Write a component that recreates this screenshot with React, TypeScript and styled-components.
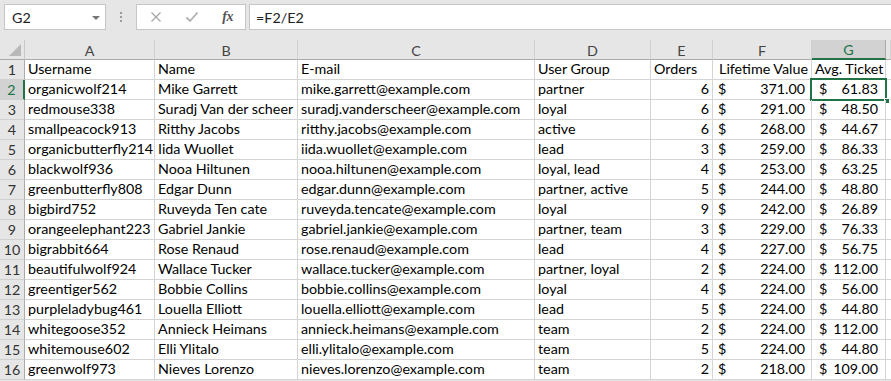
import React from "react";
import styled, { createGlobalStyle, css } from "styled-components";

const Global = createGlobalStyle`
  html, body { margin: 0; padding: 0; background: #ffffff; }
  body { font-family: "Lato", "Liberation Sans", sans-serif; overflow: hidden; }
`;

const Page = styled.div`
  width: 891px;
  height: 381px;
  overflow: hidden;
  background: #e6e6e6;
  display: flex;
  flex-direction: column;
`;

const Toolbar = styled.div`
  height: 40px;
  flex: 0 0 40px;
  display: flex;
  align-items: flex-start;
  padding: 4px 0 0 4px;
  box-sizing: border-box;
  background: #e6e6e6;
`;

const NameBox = styled.div`
  width: 102px;
  height: 26px;
  box-sizing: border-box;
  background: #ffffff;
  border: 1px solid #c6c6c6;
  display: flex;
  align-items: center;
  justify-content: space-between;
  padding: 0 5px 0 7px;
  font-size: 14.3px;
  color: #222;
`;

const DropArrow = styled.span`
  width: 0;
  height: 0;
  border-left: 4px solid transparent;
  border-right: 4px solid transparent;
  border-top: 4px solid #777;
  margin-top: 1px;
`;

const Grip = styled.div`
  width: 30px;
  height: 26px;
  display: flex;
  flex-direction: column;
  align-items: center;
  justify-content: center;
  gap: 2px;
  & > i {
    display: block;
    width: 2px;
    height: 2px;
    background: #9a9a9a;
  }
`;

const IconBox = styled.div`
  width: 110px;
  height: 26px;
  box-sizing: border-box;
  background: #ffffff;
  border: 1px solid #c6c6c6;
  display: flex;
  align-items: center;
  justify-content: space-between;
  padding: 0 12px 0 13px;
`;

const Fx = styled.span`
  font-family: "Liberation Serif", serif;
  font-style: italic;
  font-weight: bold;
  font-size: 14px;
  color: #555;
  letter-spacing: -0.5px;
`;

const FormulaInput = styled.div`
  flex: 1;
  height: 26px;
  margin-left: 3px;
  margin-right: -4px;
  box-sizing: border-box;
  background: #ffffff;
  border: 1px solid #c6c6c6;
  display: flex;
  align-items: center;
  padding-left: 6px;
  font-size: 14.3px;
  color: #222;
`;

const Sheet = styled.div`
  display: grid;
  grid-template-columns: 25px 130px 143px 237px 116px 62px 99px 74px 1fr;
  grid-auto-rows: 20px;
  background: #ffffff;
  font-size: 14.3px;
`;

const headerBase = css`
  box-sizing: border-box;
  background: #e6e6e6;
  color: #444;
  display: flex;
  align-items: center;
  justify-content: center;
  font-size: 14.3px;
`;

const Corner = styled.div`
  ${headerBase};
  position: relative;
  border-right: 1px solid #c8c8c8;
  border-bottom: 1px solid #ababab;
  &::after {
    content: "";
    position: absolute;
    right: 3px;
    bottom: 3px;
    width: 0;
    height: 0;
    border-left: 12px solid transparent;
    border-bottom: 12px solid #b8b8b8;
  }
`;

const ColHead = styled.div<{ $active?: boolean }>`
  ${headerBase};
  border-right: 1px solid #d0d0d0;
  border-bottom: 1px solid #ababab;
  padding-top: 1px;
  ${(p) =>
    p.$active &&
    css`
      background: #d2d2d2;
      color: #217346;
      border-right-color: #ababab;
      border-bottom: 2px solid #217346;
    `}
`;

const RowHead = styled.div<{ $active?: boolean }>`
  ${headerBase};
  color: #333;
  border-right: 1px solid #ababab;
  border-bottom: 1px solid #d0d0d0;
  ${(p) =>
    p.$active &&
    css`
      background: #d2d2d2;
      color: #217346;
      border-right: 2px solid #217346;
    `}
`;

const Cell = styled.div<{ $align?: "left" | "right" }>`
  box-sizing: border-box;
  border-right: 1px solid #d4d4d4;
  border-bottom: 1px solid #d4d4d4;
  color: #000;
  white-space: nowrap;
  overflow: hidden;
  padding: 0 3px;
  display: flex;
  align-items: flex-end;
  padding-bottom: 1px;
  line-height: 18px;
  justify-content: ${(p) => (p.$align === "right" ? "flex-end" : "flex-start")};
`;

const MoneyCell = styled.div<{ $selected?: boolean; $padL: number; $padR: number }>`
  box-sizing: border-box;
  position: relative;
  border-right: 1px solid #d4d4d4;
  border-bottom: 1px solid #d4d4d4;
  color: #000;
  white-space: nowrap;
  display: flex;
  align-items: flex-end;
  justify-content: space-between;
  padding: 0 ${(p) => p.$padR}px 1px ${(p) => p.$padL}px;
  line-height: 18px;
  ${(p) =>
    p.$selected &&
    css`
      overflow: visible;
      &::before {
        content: "";
        position: absolute;
        left: -2px;
        top: -2px;
        right: -2px;
        bottom: -2px;
        border: 2px solid #217346;
        pointer-events: none;
      }
      &::after {
        content: "";
        position: absolute;
        right: -5px;
        bottom: -5px;
        width: 6px;
        height: 6px;
        background: #217346;
        border: 1px solid #ffffff;
        box-sizing: border-box;
      }
    `}
`;

const EmptyCell = styled.div`
  box-sizing: border-box;
  border-bottom: 1px solid #d4d4d4;
`;

type Row = [string, string, string, string, number, string, string];

const rows: Row[] = [
  ["organicwolf214", "Mike Garrett", "mike.garrett@example.com", "partner", 6, "371.00", "61.83"],
  ["redmouse338", "Suradj Van der scheer", "suradj.vanderscheer@example.com", "loyal", 6, "291.00", "48.50"],
  ["smallpeacock913", "Ritthy Jacobs", "ritthy.jacobs@example.com", "active", 6, "268.00", "44.67"],
  ["organicbutterfly214", "Iida Wuollet", "iida.wuollet@example.com", "lead", 3, "259.00", "86.33"],
  ["blackwolf936", "Nooa Hiltunen", "nooa.hiltunen@example.com", "loyal, lead", 4, "253.00", "63.25"],
  ["greenbutterfly808", "Edgar Dunn", "edgar.dunn@example.com", "partner, active", 5, "244.00", "48.80"],
  ["bigbird752", "Ruveyda Ten cate", "ruveyda.tencate@example.com", "loyal", 9, "242.00", "26.89"],
  ["orangeelephant223", "Gabriel Jankie", "gabriel.jankie@example.com", "partner, team", 3, "229.00", "76.33"],
  ["bigrabbit664", "Rose Renaud", "rose.renaud@example.com", "lead", 4, "227.00", "56.75"],
  ["beautifulwolf924", "Wallace Tucker", "wallace.tucker@example.com", "partner, loyal", 2, "224.00", "112.00"],
  ["greentiger562", "Bobbie Collins", "bobbie.collins@example.com", "loyal", 4, "224.00", "56.00"],
  ["purpleladybug461", "Louella Elliott", "louella.elliott@example.com", "lead", 5, "224.00", "44.80"],
  ["whitegoose352", "Annieck Heimans", "annieck.heimans@example.com", "team", 2, "224.00", "112.00"],
  ["whitemouse602", "Elli Ylitalo", "elli.ylitalo@example.com", "team", 5, "224.00", "44.80"],
  ["greenwolf973", "Nieves Lorenzo", "nieves.lorenzo@example.com", "team", 2, "218.00", "109.00"],
];

const cols = ["A", "B", "C", "D", "E", "F", "G", ""];

export default function App() {
  return (
    <Page>
      <Global />
      <Toolbar>
        <NameBox>
          <span>G2</span>
          <DropArrow />
        </NameBox>
        <Grip>
          <i />
          <i />
          <i />
        </Grip>
        <IconBox>
          <svg width="12" height="12" viewBox="0 0 12 12">
            <path d="M1.5 1.5 L10.5 10.5 M10.5 1.5 L1.5 10.5" stroke="#a6a6a6" strokeWidth="1.3" fill="none" />
          </svg>
          <svg width="14" height="12" viewBox="0 0 14 12">
            <path d="M1.5 6.5 L5 10 L12.5 1.5" stroke="#b0b0b0" strokeWidth="1.8" fill="none" />
          </svg>
          <Fx>fx</Fx>
        </IconBox>
        <FormulaInput>=F2/E2</FormulaInput>
      </Toolbar>
      <Sheet>
        <Corner />
        {cols.map((c, i) => (
          <ColHead key={i} $active={c === "G"}>
            {c}
          </ColHead>
        ))}
        <RowHead>1</RowHead>
        <Cell>Username</Cell>
        <Cell>Name</Cell>
        <Cell>E-mail</Cell>
        <Cell>User Group</Cell>
        <Cell>Orders</Cell>
        <Cell $align="right">Lifetime Value</Cell>
        <Cell>Avg. Ticket</Cell>
        <EmptyCell />
        {rows.map((r, i) => {
          const n = i + 2;
          return (
            <React.Fragment key={n}>
              <RowHead $active={n === 2}>{n}</RowHead>
              <Cell>{r[0]}</Cell>
              <Cell>{r[1]}</Cell>
              <Cell>{r[2]}</Cell>
              <Cell>{r[3]}</Cell>
              <Cell $align="right">{r[4]}</Cell>
              <MoneyCell $padL={5} $padR={6}>
                <span>$</span>
                <span>{r[5]}</span>
              </MoneyCell>
              <MoneyCell $padL={7} $padR={7} $selected={n === 2}>
                <span>$</span>
                <span>{r[6]}</span>
              </MoneyCell>
              <EmptyCell />
            </React.Fragment>
          );
        })}
      </Sheet>
    </Page>
  );
}
